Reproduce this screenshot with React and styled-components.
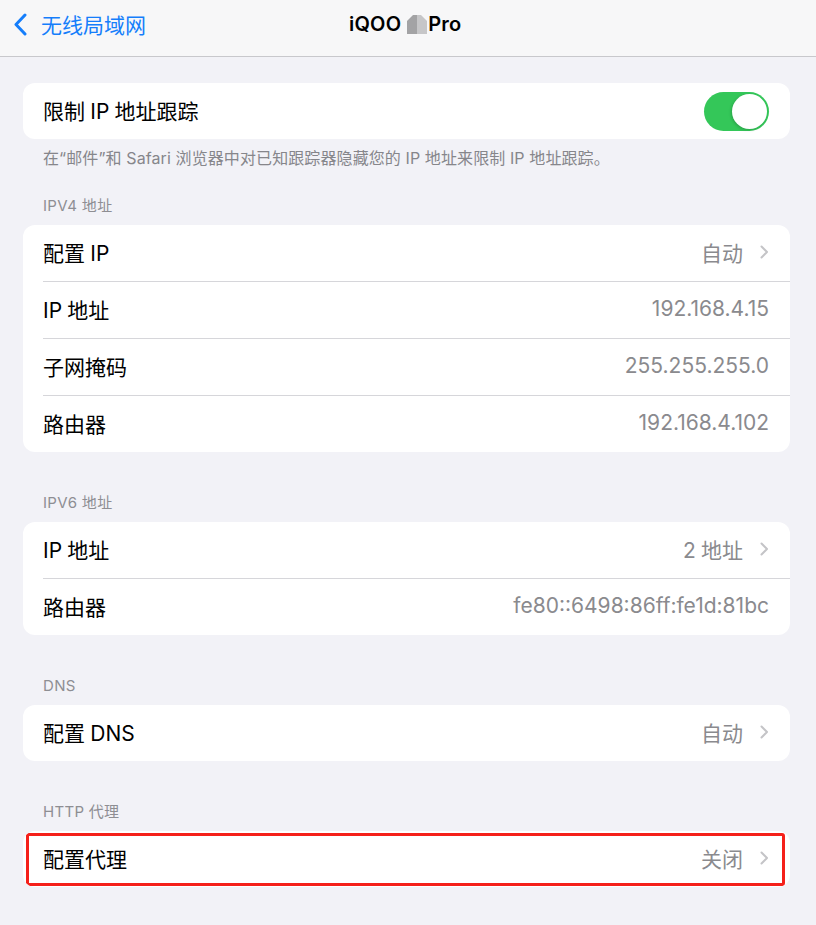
import React from 'react';
import styled, { createGlobalStyle } from 'styled-components';

const GlobalStyle = createGlobalStyle`
  html, body {
    margin: 0;
    padding: 0;
    background: #f2f2f7;
  }
  body {
    font-family: "Inter", "Noto Sans CJK SC", sans-serif;
    color: #000;
    -webkit-font-smoothing: antialiased;
  }
`

const Page = styled.div`
  width: 816px;
  min-height: 925px;
  background: #f2f2f7;
`

const NavBar = styled.header`
  height: 56px;
  background: #f7f7f8;
  border-bottom: 1px solid #c8c8cc;
  display: flex;
  align-items: center;
  position: relative;
`

const BackLink = styled.div`
  display: flex;
  align-items: center;
  gap: 14px;
  padding-left: 14px;
  color: #157efb;
  font-size: 21px;
  margin-top: -8px;
`

const Title = styled.div`
  position: absolute;
  left: 349px;
  top: 12px;
  display: flex;
  align-items: center;
  font-size: 20px;
  font-weight: 600;
  letter-spacing: 0.2px;
`

const Content = styled.main`
  padding: 26px 26px 30px 23px;
`

const Card = styled.section`
  background: #fff;
  border-radius: 12px;
  overflow: hidden;
  position: relative;

  ${p => p.$highlight && `
    &::after {
      content: '';
      position: absolute;
      top: 2px;
      left: 3px;
      right: 5px;
      bottom: 1px;
      border: 3px solid #f5201a;
      border-radius: 3px;
      pointer-events: none;
    }
  `}
`

const Row = styled.div`
  height: 56px;
  box-sizing: border-box;
  display: flex;
  align-items: center;
  justify-content: space-between;
  padding: 0 21px 3px 20px;
  position: relative;

  & + & {
    margin-top: 1px;
  }
  & + &::before {
    content: '';
    position: absolute;
    top: -1px;
    left: 20px;
    right: 0;
    height: 1px;
    background: #d6d6da;
  }
`

const Label = styled.span`
  font-size: 21px;
  color: #000;
`

const Value = styled.span`
  display: flex;
  align-items: center;
  gap: 17px;
  font-size: 21px;
  color: #8a8a8e;
`

const Footnote = styled.p`
  margin: 9px 0 0 20px;
  font-size: 16px;
  line-height: 20px;
  letter-spacing: 0.1px;
  color: #86868b;
`

const SectionHeader = styled.h3`
  margin: ${p => p.$first ? '28px' : '41px'} 0 9px 20px;
  font-size: 15px;
  line-height: 20px;
  font-weight: 400;
  letter-spacing: 0.3px;
  color: #8e8e93;
`

const ToggleTrack = styled.div`
  width: 65px;
  height: 39px;
  border-radius: 20px;
  background: #34c759;
  position: relative;
  margin-top: 3px;
`

const ToggleKnob = styled.div`
  position: absolute;
  right: 2px;
  top: 2px;
  width: 35px;
  height: 35px;
  border-radius: 50%;
  background: #fff;
  box-shadow: -1px 1px 3px rgba(0, 0, 0, 0.18);
`

const Chevron = () => (
  <svg width="9" height="14" viewBox="0 0 9 14">
    <path d="M1.5 1.5 L7 7 L1.5 12.5" fill="none" stroke="#c4c4c7" strokeWidth="2" strokeLinecap="round" strokeLinejoin="round" />
  </svg>
)

const BackChevron = () => (
  <svg width="13" height="23" viewBox="0 0 13 23">
    <path d="M11 2 L2 11.5 L11 21" fill="none" stroke="#157efb" strokeWidth="3" strokeLinecap="round" strokeLinejoin="round" />
  </svg>
)

const Redacted = () => (
  <svg width="20" height="19" viewBox="0 0 20 19" style={{ margin: '0 1px 0 6px' }}>
    <polygon points="0,6 6,0 10,0 10,19 0,19" fill="#a3a3a5" />
    <polygon points="10,0 14,0 20,6 20,19 10,19" fill="#c6c6c8" />
  </svg>
)

const SettingRow = ({ label, value, chevron }) => (
  <Row>
    <Label>{ label }</Label>
    <Value>
      { value }
      { chevron && <Chevron /> }
    </Value>
  </Row>
)

const Toggle = () => (
  <ToggleTrack>
    <ToggleKnob />
  </ToggleTrack>
)

export default function App () {
  return (
    <Page>
      <GlobalStyle />
      <NavBar>
        <BackLink>
          <BackChevron />
          <span>无线局域网</span>
        </BackLink>
        <Title>
          iQOO
          <Redacted />
          Pro
        </Title>
      </NavBar>

      <Content>
        <Card>
          <Row>
            <Label>限制{'\u2005'}IP{'\u2005'}地址跟踪</Label>
            <Toggle />
          </Row>
        </Card>
        <Footnote>在“邮件”和 Safari 浏览器中对已知跟踪器隐藏您的 IP 地址来限制 IP 地址跟踪。</Footnote>

        <SectionHeader $first>IPV4 地址</SectionHeader>
        <Card>
          <SettingRow label={'配置\u2005IP'} value="自动" chevron />
          <SettingRow label={'IP\u2005地址'} value="192.168.4.15" />
          <SettingRow label="子网掩码" value="255.255.255.0" />
          <SettingRow label="路由器" value="192.168.4.102" />
        </Card>

        <SectionHeader>IPV6 地址</SectionHeader>
        <Card>
          <SettingRow label={'IP\u2005地址'} value={'2\u2005地址'} chevron />
          <SettingRow label="路由器" value="fe80::6498:86ff:fe1d:81bc" />
        </Card>

        <SectionHeader>DNS</SectionHeader>
        <Card>
          <SettingRow label={'配置\u2005DNS'} value="自动" chevron />
        </Card>

        <SectionHeader>HTTP 代理</SectionHeader>
        <Card $highlight>
          <SettingRow label="配置代理" value="关闭" chevron />
        </Card>
      </Content>
    </Page>
  );
}
